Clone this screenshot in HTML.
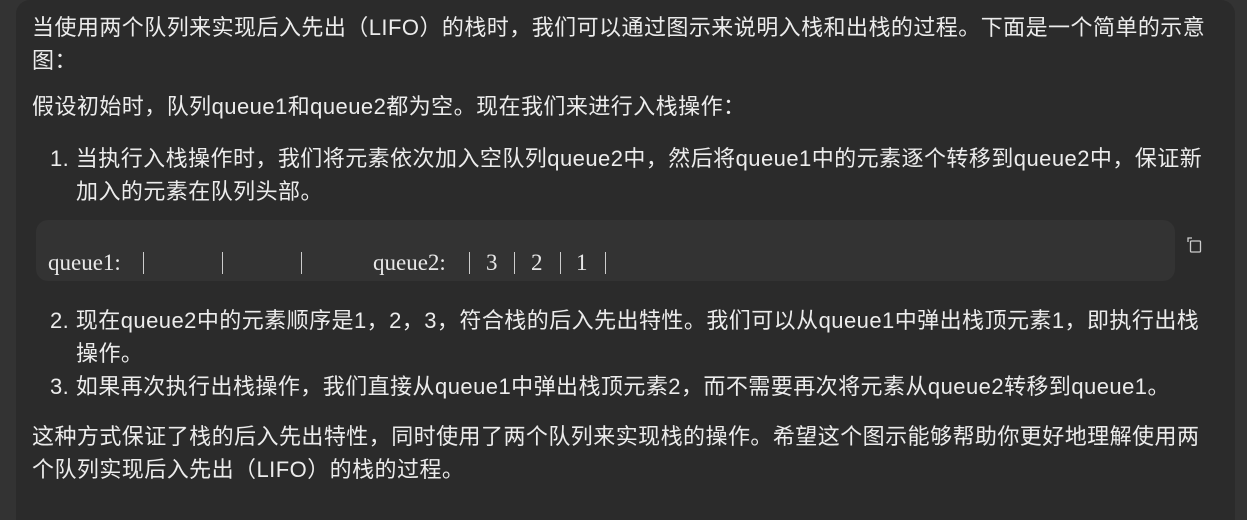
<!DOCTYPE html>
<html><head><meta charset="utf-8"><style>
body{margin:0;width:1247px;height:500px;background:#333;overflow:hidden;font-family:"Liberation Sans","Noto Sans CJK SC",sans-serif;color:#ececec}
.panel{position:absolute;left:16px;top:0;width:1219px;height:520px;background:#2b2b2b;border-radius:14px 14px 0 0}
.t{position:absolute;font-size:22px;letter-spacing:0.45px;white-space:nowrap;line-height:33px}
.code{position:absolute;left:36px;top:220px;width:1139px;height:61px;background:#333;border-radius:12px}
.c{position:absolute;top:249px;font-family:"Liberation Serif","Noto Serif CJK SC",serif;font-size:23px;color:#e8e8e8;white-space:pre;line-height:28px}
.p{position:absolute;top:252px;width:1px;height:22px;background:#ccc}
</style></head><body>
<div class="panel"></div>
<div class="t" style="left:32px;top:11px">当使用两个队列来实现后入先出（LIFO）的栈时，我们可以通过图示来说明入栈和出栈的过程。下面是一个简单的示意</div>
<div class="t" style="left:32px;top:44px">图：</div>
<div class="t" style="left:32px;top:90px">假设初始时，队列queue1和queue2都为空。现在我们来进行入栈操作：</div>
<div class="t" style="left:50px;top:142px">1. 当执行入栈操作时，我们将元素依次加入空队列queue2中，然后将queue1中的元素逐个转移到queue2中，保证新</div>
<div class="t" style="left:76px;top:175px">加入的元素在队列头部。</div>
<div class="code"></div>
<div class="c" style="left:48px">queue1:</div>
<div class="p" style="left:143px"></div><div class="p" style="left:222px"></div><div class="p" style="left:301px"></div>
<div class="c" style="left:373px">queue2:</div>
<div class="p" style="left:469px"></div><div class="p" style="left:514px"></div><div class="p" style="left:560px"></div><div class="p" style="left:605px"></div>
<div class="c" style="left:486px">3</div><div class="c" style="left:531px">2</div><div class="c" style="left:576px">1</div>
<svg style="position:absolute;left:1186px;top:236px" width="18" height="18" viewBox="0 0 18 18" fill="none" stroke="#ccc" stroke-width="1.3"><path d="M2 6V2h4"/><rect x="4.5" y="5" width="10" height="11" rx="1"/></svg>
<div class="t" style="left:50px;top:304px">2. 现在queue2中的元素顺序是1，2，3，符合栈的后入先出特性。我们可以从queue1中弹出栈顶元素1，即执行出栈</div>
<div class="t" style="left:76px;top:337px">操作。</div>
<div class="t" style="left:50px;top:370px">3. 如果再次执行出栈操作，我们直接从queue1中弹出栈顶元素2，而不需要再次将元素从queue2转移到queue1。</div>
<div class="t" style="left:32px;top:420px">这种方式保证了栈的后入先出特性，同时使用了两个队列来实现栈的操作。希望这个图示能够帮助你更好地理解使用两</div>
<div class="t" style="left:32px;top:453px">个队列实现后入先出（LIFO）的栈的过程。</div>
</body></html>
